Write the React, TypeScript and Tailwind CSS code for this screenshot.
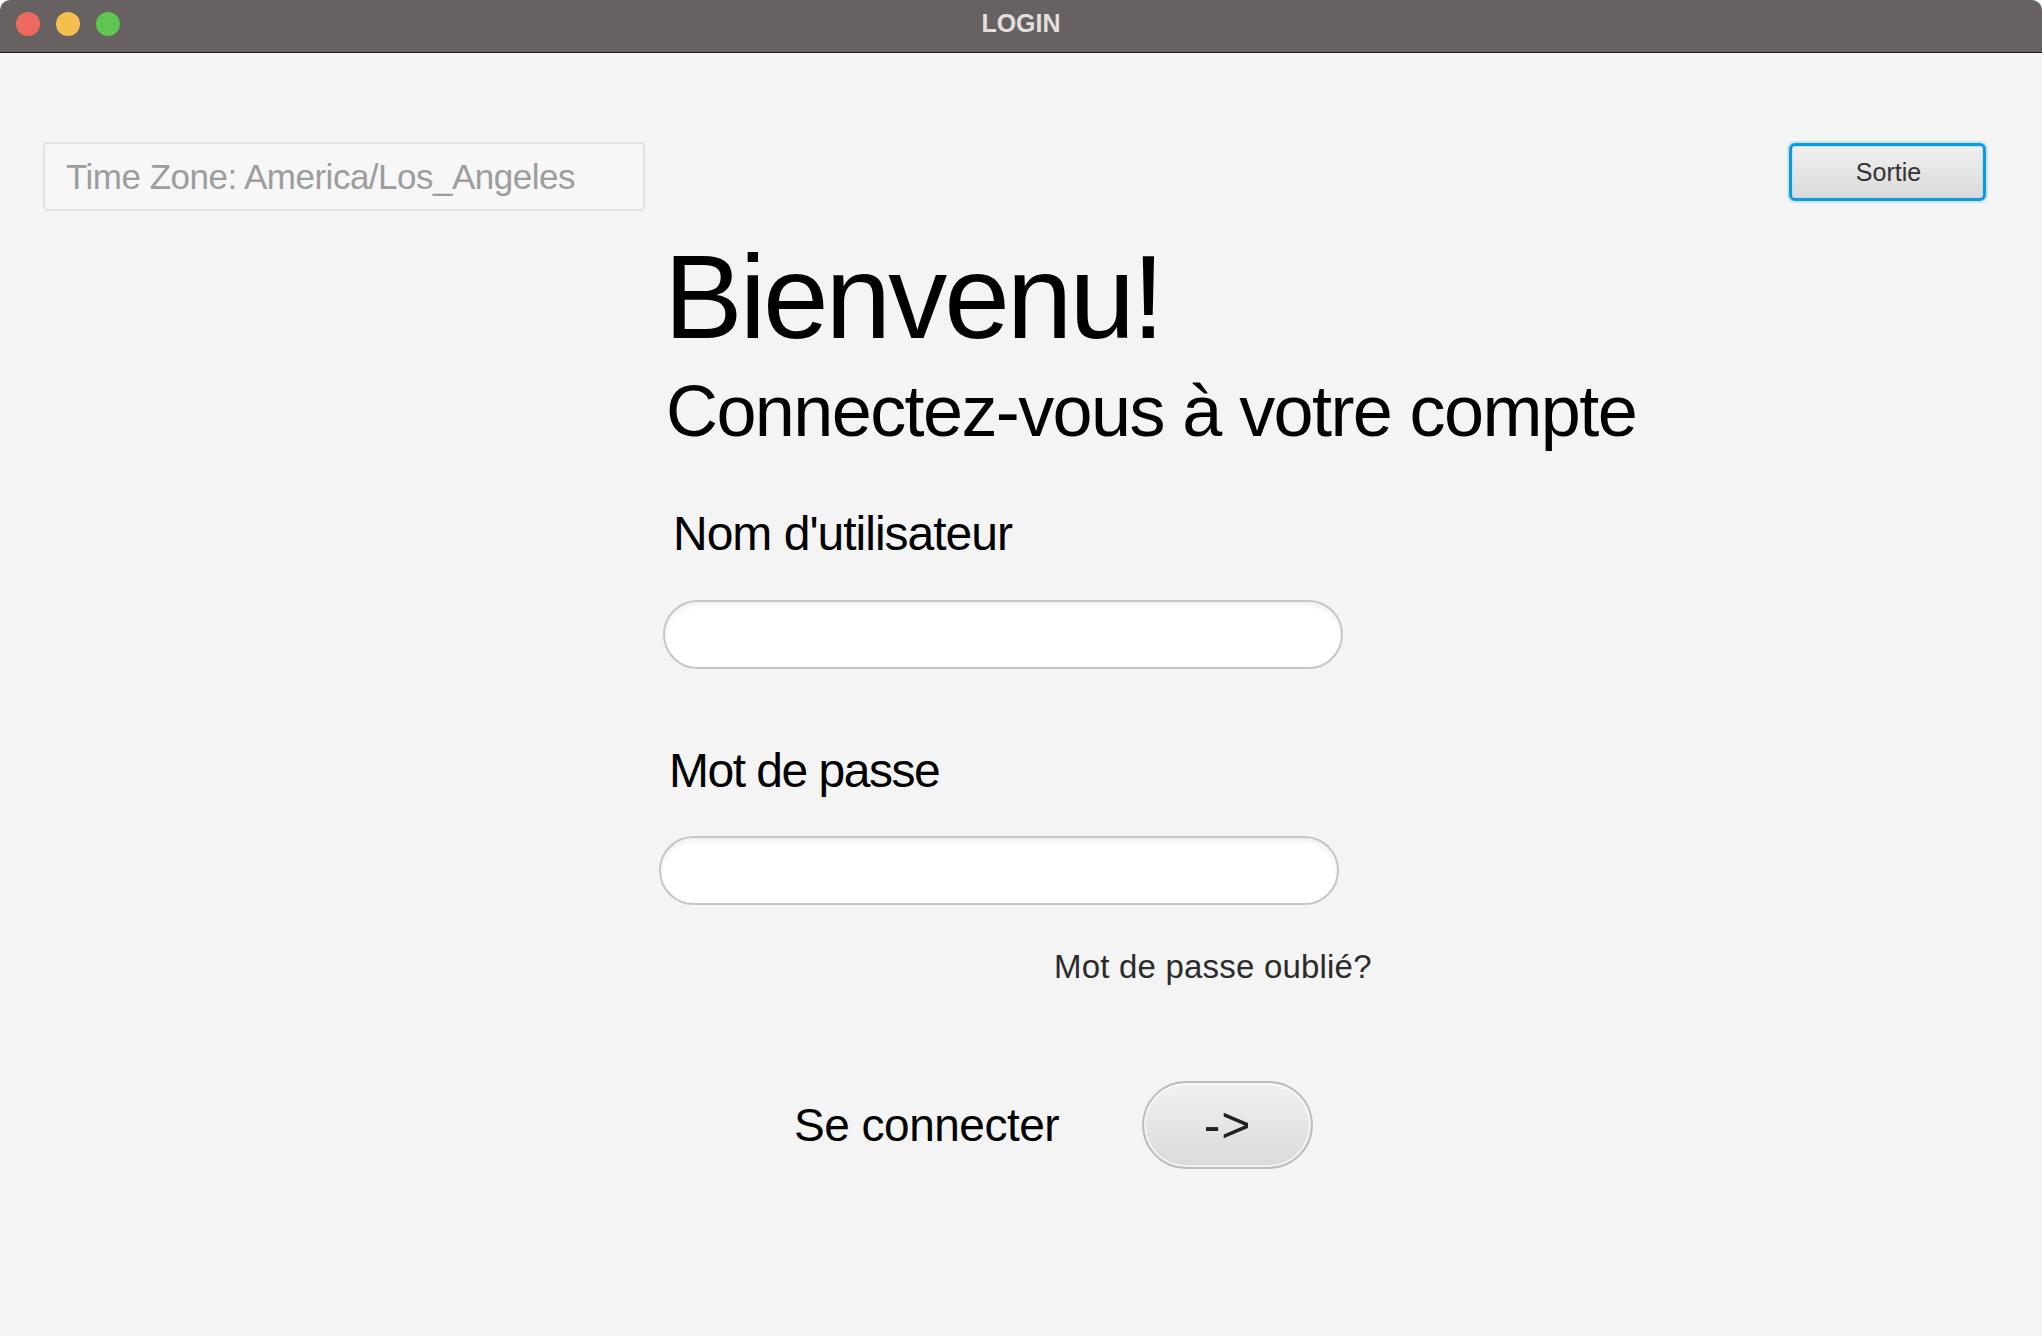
import React from "react";

export default function App() {
  const font = { fontFamily: '"Liberation Sans", Arial, sans-serif' };
  return (
    <div className="w-[2042px] h-[1336px] bg-white overflow-hidden" style={font}>
      <div className="w-full h-full flex flex-col rounded-t-[10px] overflow-hidden bg-[#f4f4f4]">
        {/* Title bar */}
        <div className="relative h-[53px] shrink-0 bg-[#676261] border-b border-[#1f1f1f] flex items-center justify-center">
          <div className="absolute left-[16px] top-[12px] flex gap-[16px]">
            <span className="w-[24px] h-[24px] rounded-full bg-[#ee6a5f]" />
            <span className="w-[24px] h-[24px] rounded-full bg-[#f5bf4f]" />
            <span className="w-[24px] h-[24px] rounded-full bg-[#61c554]" />
          </div>
          <span className="text-[25px] font-bold text-[#e3dfde] leading-none mt-[-6px]">LOGIN</span>
        </div>

        {/* Top row */}
        <div className="flex justify-between items-start pl-[43px] pr-[56px] pt-[89px]">
          <div className="w-[602px] h-[69px] border-2 border-[#e2e2e2] rounded-[5px] bg-[#f7f7f7] flex items-center pl-[21px]">
            <span className="text-[35px] tracking-[-0.5px] text-[#9d9d9d] leading-none">
              Time Zone: America/Los_Angeles
            </span>
          </div>
          <button className="mt-[1px] w-[197px] h-[58px] rounded-[6px] border-[3px] border-[#0d9ad8] bg-linear-to-b from-[#efefef] to-[#dadada] shadow-[0_0_0_2px_rgba(13,154,216,0.18),inset_0_0_0_1px_rgba(190,220,235,0.8)] flex items-center justify-center">
            <span className="text-[25px] text-[#333] leading-none ml-[2px]">Sortie</span>
          </button>
        </div>

        {/* Central column */}
        <div className="flex flex-col pl-[663px] mt-[27px]">
          <h1 className="text-[118px] tracking-[-3px] leading-none text-black ml-[1px]">Bienvenu!</h1>
          <h2 className="mt-[19px] ml-[3px] text-[72px] tracking-[-1.6px] leading-none text-black">
            Connectez-vous à votre compte
          </h2>

          <div className="mt-[63px] ml-[10px] text-[48px] tracking-[-1px] leading-none text-black">
            Nom d'utilisateur
          </div>
          <div className="mt-[42px] w-[680px] h-[69px] rounded-full bg-white border-2 border-[#c6c6c6] shadow-[inset_0_4px_4px_rgba(0,0,0,0.05)]" />

          <div className="mt-[78px] ml-[6px] text-[48px] tracking-[-1.5px] leading-none text-black">
            Mot de passe
          </div>
          <div className="mt-[41px] ml-[-4px] w-[680px] h-[69px] rounded-full bg-white border-2 border-[#c6c6c6] shadow-[inset_0_4px_4px_rgba(0,0,0,0.05)]" />

          <div className="mt-[45px] ml-[391px] text-[33px] tracking-[0.2px] leading-none text-[#2b2b2b]">
            Mot de passe oublié?
          </div>

          <div className="mt-[98px] ml-[131px] flex items-center">
            <span className="text-[46px] tracking-[-0.5px] leading-none text-black">Se connecter</span>
            <button className="ml-[83px] w-[171px] h-[88px] rounded-full border-2 border-[#bcbcbc] bg-linear-to-b from-[#f1f1f1] to-[#dadada] shadow-[inset_0_0_0_2px_rgba(255,255,255,0.6)] flex items-center justify-center">
              <span className="text-[50px] leading-none text-[#222] tracking-[1px]">-&gt;</span>
            </button>
          </div>
        </div>
      </div>
    </div>
  );
}
